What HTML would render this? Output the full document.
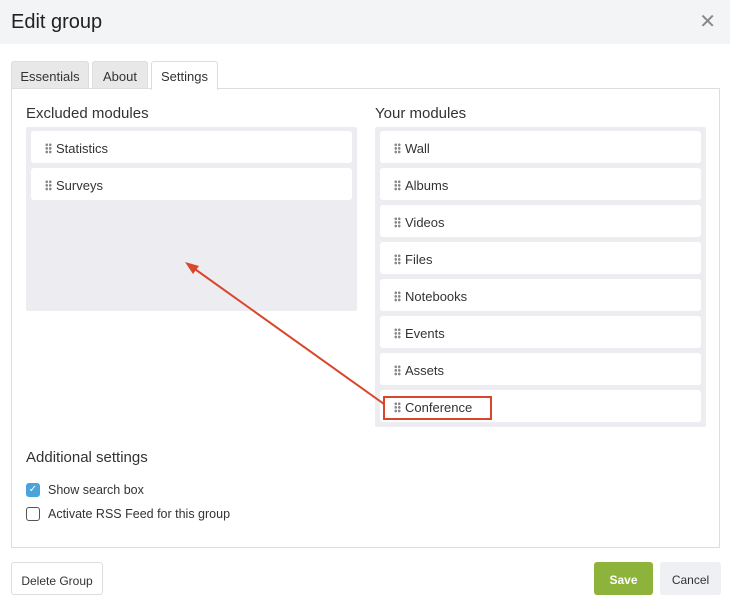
<!DOCTYPE html>
<html><head><style>
*{box-sizing:border-box;margin:0;padding:0}
body{width:730px;height:604px;background:#fff;font-family:"Liberation Sans",sans-serif;color:#333;position:relative;overflow:hidden}
.hdr{position:absolute;left:0;top:0;width:730px;height:44px;background:#f3f4f6}
.hdr h1{position:absolute;left:11px;top:11px;font-size:20px;font-weight:normal;color:#222}
.x{position:absolute;right:14px;top:9px;font-size:20px;color:#888}
.tab{position:absolute;top:61px;height:28px;font-size:13px;padding-top:7px;text-align:center;border:1px solid #ddd;border-bottom:none;border-radius:3px 3px 0 0;background:#e8e8e8}
.panel{position:absolute;left:11px;top:88px;width:709px;height:460px;border:1px solid #ddd}
.h{position:absolute;font-size:15px;color:#333}
.list{position:absolute;background:#ededf1;border-radius:2px}
.item{position:absolute;left:5px;right:5px;height:32px;background:#fff;border-radius:3px;font-size:13px;padding:10px 0 0 25px}
.item:before{content:"";position:absolute;left:14px;top:12px;width:7px;height:11px;background:radial-gradient(circle,#888 1.2px,transparent 1.4px) 0 0/3.5px 3.6px}
.cb{position:absolute;left:26px;width:14px;height:14px;border:1.5px solid #555;border-radius:3px}
.lbl{position:absolute;left:48px;font-size:12.5px}
.btn{position:absolute;top:562px;height:33px;border-radius:3px;font-size:12px;text-align:center;padding-top:11px}
</style></head><body>
<div class="hdr"><h1>Edit group</h1><div class="x">✕</div></div>
<div class="tab" style="left:11px;width:78px">Essentials</div>
<div class="tab" style="left:92px;width:56px">About</div>
<div class="tab" style="left:151px;width:67px;height:29px;background:#fff;z-index:2">Settings</div>
<div class="panel"></div>
<div class="h" style="left:26px;top:105px">Excluded modules</div>
<div class="h" style="left:375px;top:105px">Your modules</div>
<div class="list" style="left:26px;top:127px;width:331px;height:184px">
<div class="item" style="top:4px">Statistics</div>
<div class="item" style="top:41px">Surveys</div>
</div>
<div class="list" style="left:375px;top:127px;width:331px;height:300px">
<div class="item" style="top:4px">Wall</div>
<div class="item" style="top:41px">Albums</div>
<div class="item" style="top:78px">Videos</div>
<div class="item" style="top:115px">Files</div>
<div class="item" style="top:152px">Notebooks</div>
<div class="item" style="top:189px">Events</div>
<div class="item" style="top:226px">Assets</div>
<div class="item" style="top:263px">Conference</div>
</div>
<div style="position:absolute;left:383px;top:396px;width:109px;height:24px;border:2px solid #d9462b"></div>
<svg style="position:absolute;left:0;top:0" width="730" height="604"><line x1="384" y1="404" x2="192" y2="267" stroke="#d9462b" stroke-width="2"/><polygon points="185,262 199,266 193,274" fill="#d9462b"/></svg>
<div class="h" style="left:26px;top:449px">Additional settings</div>
<div class="cb" style="top:483px;background:#4ba3db;border-color:#4ba3db;color:#fff;font-size:10px;line-height:11px;text-align:center">✓</div>
<div class="lbl" style="top:483px">Show search box</div>
<div class="cb" style="top:507px"></div>
<div class="lbl" style="top:507px">Activate RSS Feed for this group</div>
<div class="btn" style="left:11px;width:92px;border:1px solid #ddd">Delete Group</div>
<div class="btn" style="left:594px;width:59px;background:#8db33a;color:#fff;font-weight:bold">Save</div>
<div class="btn" style="left:660px;width:61px;background:#eef0f4">Cancel</div>
</body></html>
